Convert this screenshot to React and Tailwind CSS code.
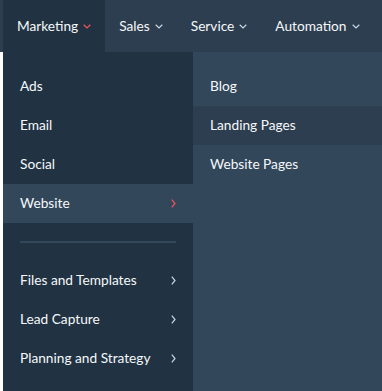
import React from 'react';

const NAV = [
  { label: 'Marketing', active: true },
  { label: 'Sales' },
  { label: 'Service' },
  { label: 'Automation' },
];

const TOP_ITEMS = ['Ads', 'Email', 'Social', 'Website'];
const BOTTOM_ITEMS = ['Files and Templates', 'Lead Capture', 'Planning and Strategy'];
const SUB_ITEMS = ['Blog', 'Landing Pages', 'Website Pages'];

const ChevronDown = ({ color }) => (
  <svg width="8" height="5" viewBox="0 0 8 5" fill="none">
    <polyline points="0.7,0.8 4,4 7.3,0.8" stroke={color} strokeWidth="1.2" />
  </svg>
);

const ChevronRight = ({ color }) => (
  <svg width="5" height="9" viewBox="0 0 5 9" fill="none">
    <polyline points="0.8,0.7 4,4.5 0.8,8.3" stroke={color} strokeWidth="1.2" />
  </svg>
);

const MenuRow = ({ label, arrow, active }) => (
  <div
    className={`h-[39px] flex items-center justify-between pl-[17px] pr-[17px] ${
      active ? 'bg-[#33475b]' : ''
    }`}
  >
    <span>{label}</span>
    {arrow && <ChevronRight color={active ? '#f2545b' : '#cbd6e2'} />}
  </div>
);

export default function App() {
  return (
    <div className="w-[382px] h-[391px] bg-white font-['Lato',sans-serif] text-[13.7px] text-[#f5f8fa] overflow-hidden">
      <nav className="h-[52px] bg-[#2d3e50] flex pl-[3px]">
        {NAV.map((item) => (
          <div
            key={item.label}
            className={`flex items-center gap-[5px] px-[14px] ${item.active ? 'bg-[#213343]' : ''}`}
          >
            <span className="text-[13.7px]">{item.label}</span>
            <ChevronDown color={item.active ? '#f2545b' : '#cbd6e2'} />
          </div>
        ))}
      </nav>
      <div className="flex h-[339px] pl-[3px]">
        <div className="w-[190px] bg-[#213343] pt-[15px]">
          {TOP_ITEMS.map((label) => (
            <MenuRow key={label} label={label} arrow={label === 'Website'} active={label === 'Website'} />
          ))}
          <div className="mx-[17px] mt-[18px] mb-[18px] h-[2px] bg-[#33475b]" />
          {BOTTOM_ITEMS.map((label) => (
            <MenuRow key={label} label={label} arrow />
          ))}
        </div>
        <div className="flex-1 bg-[#33475b] pt-[15px]">
          {SUB_ITEMS.map((label) => (
            <div
              key={label}
              className={`h-[39px] flex items-center pl-[17px] ${
                label === 'Landing Pages' ? 'bg-[#2d3e50]' : ''
              }`}
            >
              {label}
            </div>
          ))}
        </div>
      </div>
    </div>
  );
}
